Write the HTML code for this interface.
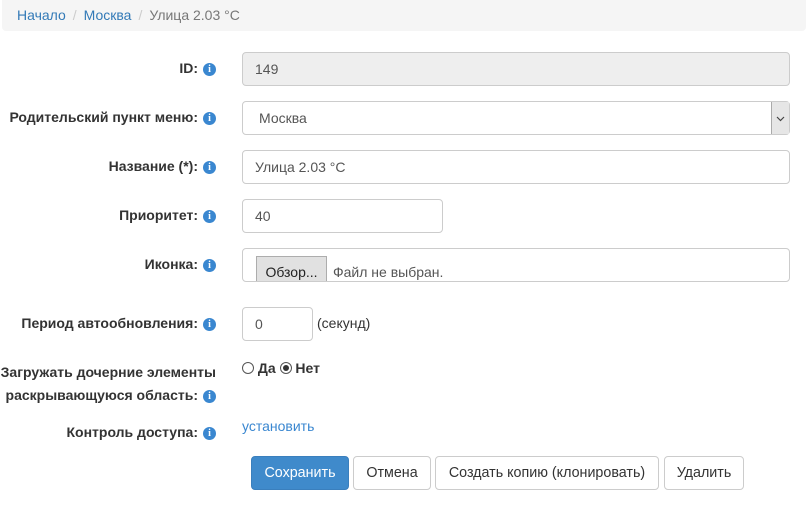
<!DOCTYPE html>
<html><head><meta charset="utf-8"><style>
*{box-sizing:border-box}
body{margin:0;width:807px;height:508px;overflow:hidden;background:#fff;font-family:"Liberation Sans",sans-serif;font-size:14px;color:#333}
.bc{position:absolute;left:2px;top:0;width:804px;height:31px;background:#f5f5f5;border-radius:0 0 4px 4px;padding:6px 15px;font-size:14px;line-height:18px}
.bc a{color:#337ab7;text-decoration:none}.bc .s{color:#ccc;padding:0 7px}.bc .c{color:#777}
.lbl{position:absolute;right:591px;font-weight:bold;text-align:right;line-height:20px;white-space:nowrap}
.i{display:inline-block;width:13px;height:13px;border-radius:50%;background:#3a87d0;color:#fff;font-size:10px;font-weight:bold;text-align:center;line-height:13px;vertical-align:1px;margin-left:5px;font-family:"Liberation Serif",serif}
.inp{position:absolute;left:242px;height:34px;border:1px solid #ccc;border-radius:4px;padding:0 12px;line-height:32px;font-size:14px;color:#555;background:#fff}
.btn{position:absolute;top:456px;height:34px;border:1px solid #ccc;border-radius:4px;background:#fff;line-height:32px;text-align:center;color:#333;font-size:14.3px}
.rad{display:inline-block;width:12px;height:12px;border:1px solid #555;border-radius:50%;vertical-align:-1px;position:relative;background:#fff}
</style></head><body>
<div class="bc"><a>Начало</a><span class="s">/</span><a>Москва</a><span class="s">/</span><span class="c">Улица 2.03 °C</span></div>

<div class="lbl" style="top:58px">ID:<span class="i">i</span></div>
<div class="inp" style="top:52px;width:548px;background:#eee">149</div>

<div class="lbl" style="top:107px">Родительский пункт меню:<span class="i">i</span></div>
<div class="inp" style="top:101px;width:548px;padding-left:16px">Москва
<div style="position:absolute;right:0;top:0;width:18px;height:32px;background:#e6e6e6;border-left:1px solid #aaa;text-align:center;line-height:30px"><svg width="9" height="6" viewBox="0 0 9 6"><path d="M1 1L4.5 4.5L8 1" stroke="#444" fill="none" stroke-width="1.2"/></svg></div></div>

<div class="lbl" style="top:156px">Название (*):<span class="i">i</span></div>
<div class="inp" style="top:150px;width:548px">Улица 2.03 °C</div>

<div class="lbl" style="top:205px">Приоритет:<span class="i">i</span></div>
<div class="inp" style="top:199px;width:201px">40</div>

<div class="lbl" style="top:254px">Иконка:<span class="i">i</span></div>
<div class="inp" style="top:248px;width:548px;padding:0;overflow:hidden">
<div style="position:absolute;left:13px;top:7px;width:71px;height:30px;background:#e1e1e1;border:1px solid #adadad;line-height:30px;text-align:center;color:#222">Обзор...</div>
<div style="position:absolute;left:90px;top:8px;line-height:30px;color:#555">Файл не выбран.</div></div>

<div class="lbl" style="top:313px">Период автообновления:<span class="i">i</span></div>
<div class="inp" style="top:307px;width:71px">0</div>
<div style="position:absolute;left:317px;top:315px;color:#333">(секунд)</div>

<div class="lbl" style="top:361px;line-height:23px">Загружать дочерние элементы<br>раскрывающуюся область:<span class="i">i</span></div>
<div style="position:absolute;left:242px;top:359px;font-weight:bold;line-height:18px"><span class="rad"></span> Да <span class="rad"><span style="position:absolute;left:2px;top:2px;width:6px;height:6px;border-radius:50%;background:#333"></span></span> Нет</div>

<div class="lbl" style="top:422px">Контроль доступа:<span class="i">i</span></div>
<div style="position:absolute;left:242px;top:417px;color:#3a87d0;line-height:18px">установить</div>

<div class="btn" style="left:251px;width:98px;background:#3f8acb;border-color:#3a7fbd;color:#fff">Сохранить</div>
<div class="btn" style="left:353px;width:78px">Отмена</div>
<div class="btn" style="left:435px;width:224px">Создать копию (клонировать)</div>
<div class="btn" style="left:664px;width:80px">Удалить</div>
</body></html>
